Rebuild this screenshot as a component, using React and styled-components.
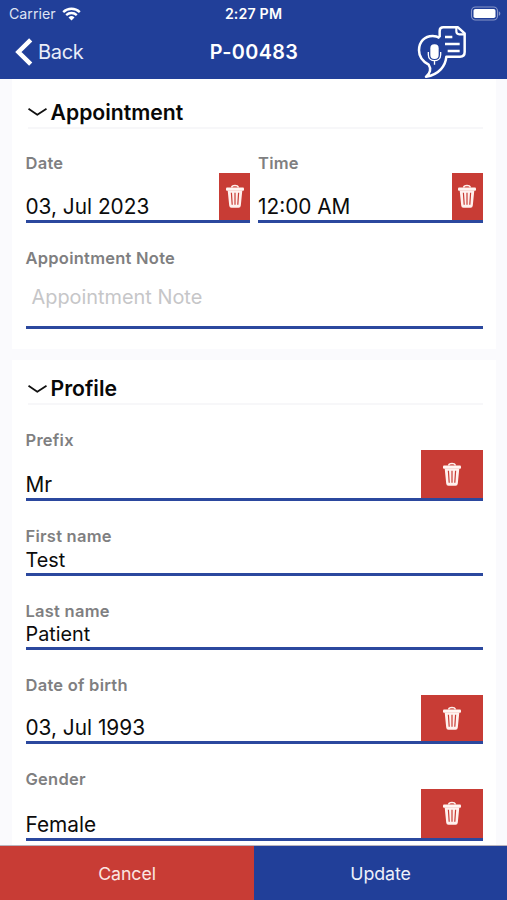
import React, { useState } from "react";
import styled, { createGlobalStyle } from "styled-components";

const BLUE = "#213f99";
const RED = "#c83c35";

const GlobalStyle = createGlobalStyle`
  * {
    box-sizing: border-box;
  }
  body {
    margin: 0;
    font-family: Inter, Roboto, "Liberation Sans", sans-serif;
    color: #0c0c0c;
  }
  button {
    border: 0;
    padding: 0;
    margin: 0;
    background: none;
    font: inherit;
    color: inherit;
    cursor: pointer;
  }
`;

const Screen = styled.div`
  display: flex;
  flex-direction: column;
  width: 507px;
  height: 900px;
  overflow: hidden;
  background: #fafafd;
`;

const Header = styled.header`
  flex: none;
  height: 79px;
  background: ${BLUE};
  color: #fff;
`;

const StatusBar = styled.div`
  display: grid;
  grid-template-columns: 1fr auto 1fr;
  align-items: center;
  height: 27px;
  padding: 0 6px 0 9px;
`;

const Carrier = styled.div`
  display: flex;
  align-items: center;
  gap: 6px;
  font-size: 14.2px;
  color: #dfe4f3;
`;

const Clock = styled.div`
  margin-right: 3px;
  font-size: 14.2px;
  font-weight: 600;
  letter-spacing: 0.15px;
`;

const Battery = styled.div`
  display: flex;
  justify-content: flex-end;
`;

const NavBar = styled.nav`
  display: grid;
  grid-template: 50px / 1fr auto 1fr;
  align-items: center;
  height: 50px;
  padding: 0 38px 0 15px;
`;

const BackButton = styled.button`
  display: flex;
  align-items: center;
  gap: 5px;
  font-size: 20px;
  letter-spacing: -0.3px;
  color: #e9edf8;
`;

const NavTitle = styled.h1`
  margin: 0 -24px 0 0;
  font-size: 19.8px;
  font-weight: 600;
  letter-spacing: 0.4px;
`;

const NoteButton = styled.button`
  justify-self: end;
  display: flex;
`;

const Content = styled.main`
  flex: 1;
  min-height: 0;
  overflow: hidden;
  display: flex;
  flex-direction: column;
  gap: 11px;
  padding: 0 11px 0 12px;
`;

const Card = styled.section`
  flex: none;
  padding: ${(p) => p.$top}px 13.5px 20px;
  background: #fff;
`;

const SectionHead = styled.button`
  display: flex;
  align-items: center;
  gap: 3px;
  width: 455px;
  height: 33px;
  margin: 0 0 24.5px 2px;
  padding-top: 1px;
  border-bottom: 2px solid #f7f7f9;
  font-size: 21.2px;
  font-weight: 600;
  color: #080808;
`;

const Fields = styled.div`
  display: flex;
  flex-direction: column;
  gap: 25px;
`;

const Columns = styled.div`
  display: grid;
  grid-template-columns: 1fr 1fr;
  gap: 8px;
`;

const Label = styled.div`
  height: 20px;
  font-size: 16.5px;
  font-weight: 600;
  line-height: 20px;
  letter-spacing: 0.25px;
  color: #7f7f81;
`;

const Row = styled.div`
  display: flex;
  align-items: flex-end;
  justify-content: space-between;
  height: ${(p) => p.$height}px;
  border-bottom: 3px solid #2b489e;
`;

const Value = styled.span`
  padding-bottom: ${(p) => p.$drop}px;
  font-size: ${(p) => p.$size || 20.8}px;
  line-height: 24px;
  white-space: nowrap;
`;

const Placeholder = styled(Value)`
  padding-left: 6px;
  color: #c6c6c8;
`;

const DeleteButton = styled.button`
  display: flex;
  align-items: center;
  justify-content: center;
  align-self: stretch;
  width: ${(p) => (p.$narrow ? 31 : 61.5)}px;
  background: ${RED};
`;

const Footer = styled.footer`
  flex: none;
  display: grid;
  grid-template-columns: 254px 1fr;
  height: 55px;
  border-top: 1px solid #b9b4be;
`;

const FooterButton = styled.button`
  background: ${(p) => (p.$danger ? RED : BLUE)};
  color: ${(p) => (p.$danger ? "#fbe6e2" : "#eef1fa")};
  font-size: 17.8px;
  letter-spacing: -0.1px;
`;

const WifiIcon = () => (
  <svg width="19" height="14" viewBox="0 0 19 14" fill="none" stroke="#fff">
    <path d="M1.2 5.1a12 12 0 0 1 16.6 0" strokeWidth="2.4" />
    <path d="M4.2 8.1a7.7 7.7 0 0 1 10.6 0" strokeWidth="2.3" />
    <path d="M9.5 13.4L6.5 10.5a4.4 4.4 0 0 1 6 0z" fill="#fff" stroke="none" />
  </svg>
);

const BatteryIcon = () => (
  <svg width="31" height="15" viewBox="0 0 31 15">
    <rect x="1.5" y="1" width="26" height="13" rx="4" fill="none" stroke="#8795c8" strokeWidth="1.1" />
    <rect x="3.5" y="3" width="22" height="9" rx="1.8" fill="#fff" />
    <path d="M28.8 5.2c2 .8 2 3.8 0 4.6z" fill="#8795c8" />
  </svg>
);

const BackIcon = () => (
  <svg width="18" height="28" viewBox="0 0 18 28" fill="none" stroke="#fff" strokeWidth="4.5">
    <path d="M15.7 1.8L3.4 14l12.3 12.2" />
  </svg>
);

// speech bubble with a microphone, overlapping a document
const DictationIcon = () => (
  <svg width="52" height="54" viewBox="50 16 156 162" fill="none" stroke="#fff">
    <path
      d="M118 53V34q0-11 11-11h44l20 18v56q0 14-14 14h-41c-2 26-20 53-61 60 13-9 16-24 8-36C62 123 56 108 56 92c0-26 17-43 41-43 8 0 15 2 21 6"
      strokeWidth="7.5"
      strokeLinejoin="round"
    />
    <path d="M168 25v10q0 9 9 9h15" strokeWidth="6.5" />
    <path d="M134 52h22M134 73h44M142 94h36" strokeWidth="7" />
    <rect x="90" y="74" width="25" height="44" rx="12" fill="#fff" stroke="none" />
    <path d="M84 97v8c0 24 37 24 37 0v-8M102.5 123v12" strokeWidth="4" />
  </svg>
);

const ChevronIcon = () => (
  <svg width="20" height="11" viewBox="0 0 20 11" fill="none" stroke="#111" strokeWidth="1.8">
    <path d="M.5 2.8l8.8 6L18.5 2.8" strokeLinejoin="round" />
  </svg>
);

const TrashIcon = () => (
  <svg width="18" height="24" viewBox="0 0 18 24">
    <path d="M5.7 3.5c0-2.8 6.6-2.8 6.6 0" fill="none" stroke="#fdeeea" strokeWidth="1.5" />
    <rect x="0" y="3.6" width="18" height="3.2" rx="1" fill="#fff5f2" />
    <path d="M1.7 6.6h14.6l-1.5 14.8q-.2 2.3-2.2 2.3H5.4q-2 0-2.2-2.3z" fill="#fff1ee" />
    <path d="M5.4 8.7l.8 12M9 8.7v12M12.6 8.7l-.8 12" stroke={RED} strokeWidth="1.2" />
  </svg>
);

const Field = ({ label, value, height, drop = 1, size, removable, narrow }) => (
  <div>
    <Label>{label}</Label>
    <Row $height={height}>
      <Value $drop={drop} $size={size}>
        {value}
      </Value>
      {removable && (
        <DeleteButton $narrow={narrow} aria-label={`Clear ${label}`}>
          <TrashIcon />
        </DeleteButton>
      )}
    </Row>
  </div>
);

const Section = ({ title, top, children }) => {
  const [open, setOpen] = useState(true);
  return (
    <Card $top={top}>
      <SectionHead onClick={() => setOpen(!open)}>
        <ChevronIcon />
        {title}
      </SectionHead>
      {open && <Fields>{children}</Fields>}
    </Card>
  );
};

const App = () => {
  return (
    <Screen>
      <GlobalStyle />
      <Header>
        <StatusBar>
          <Carrier>
            Carrier
            <WifiIcon />
          </Carrier>
          <Clock>2:27 PM</Clock>
          <Battery>
            <BatteryIcon />
          </Battery>
        </StatusBar>
        <NavBar>
          <BackButton>
            <BackIcon />
            Back
          </BackButton>
          <NavTitle>P-00483</NavTitle>
          <NoteButton aria-label="Dictate note">
            <DictationIcon />
          </NoteButton>
        </NavBar>
      </Header>
      <Content>
        <Section title="Appointment" top={16.5}>
          <Columns>
            <Field label="Date" value="03, Jul 2023" height={49.5} removable narrow />
            <Field label="Time" value="12:00 AM" height={49.5} removable narrow />
          </Columns>
          <div>
            <Label>Appointment Note</Label>
            <Row $height={61.5}>
              <Placeholder $drop={17} $size={19.9}>
                Appointment Note
              </Placeholder>
            </Row>
          </div>
        </Section>
        <Section title="Profile" top={12}>
          <Field label="Prefix" value="Mr" height={51.5} removable />
          <Field label="First name" value="Test" height={29.5} size={19.8} />
          <Field label="Last name" value="Patient" height={29.5} size={19.8} />
          <Field label="Date of birth" value="03, Jul 1993" height={49} removable />
          <Field label="Gender" value="Female" height={51.5} removable />
        </Section>
      </Content>
      <Footer>
        <FooterButton $danger>Cancel</FooterButton>
        <FooterButton>Update</FooterButton>
      </Footer>
    </Screen>
  );
};

export default App;
